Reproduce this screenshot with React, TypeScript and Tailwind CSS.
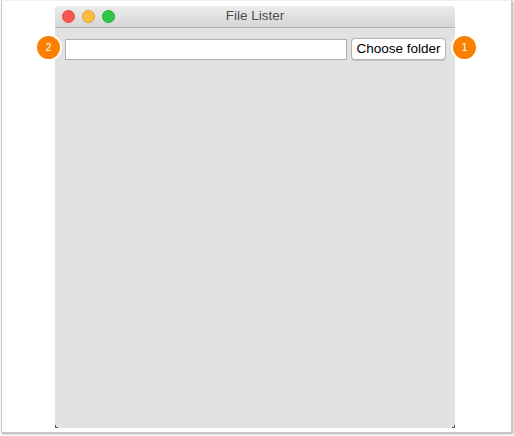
import React from "react";

export default function App() {
  return (
    <div className="w-[514px] h-[436px] bg-white relative" style={{ fontFamily: '"Helvetica Neue", "Liberation Sans", Arial, sans-serif' }}>
      <div className="absolute left-[1px] top-0 w-[511px] h-[433px] border-l border-r border-b border-t border-[#c8c8c8] border-t-[#f0f0f0] shadow-[1px_1px_2px_rgba(0,0,0,0.35)]" />
      <div className="absolute left-[55px] top-[6px] w-[400px] h-[422px] flex flex-col bg-[#e2e2e2] rounded-t-[4px] overflow-hidden">
        <div className="h-[22px] relative flex items-center bg-gradient-to-b from-[#ececec] to-[#d6d6d6] border-b border-[#b4b4b4]">
          <div className="flex gap-[7px] pl-[7px]">
            <div className="w-[13px] h-[13px] rounded-full bg-[#fc5753] border border-[#e0443e]" />
            <div className="w-[13px] h-[13px] rounded-full bg-[#fdbc40] border border-[#dea123]" />
            <div className="w-[13px] h-[13px] rounded-full bg-[#33c748] border border-[#1aab29]" />
          </div>
          <div className="absolute inset-0 flex items-center justify-center text-[13.5px] text-[#4d4d4d]">File Lister</div>
        </div>
        <div className="flex items-center gap-[4px] pl-[10px] pt-[10px]">
          <div className="w-[282px] h-[21px] bg-white border border-[#b0b0b0]" />
          <div className="w-[95px] h-[22px] flex items-center justify-center bg-white border border-[#b6b6b6] rounded-[4px] text-[13.5px] text-black shadow-[0_0.5px_1px_rgba(0,0,0,0.15)]">Choose folder</div>
        </div>
        <div className="flex-1" />
      </div>
      <div className="absolute left-[55px] top-[425px] w-[3px] h-[3px] border-l border-b border-[#555]" />
      <div className="absolute left-[452px] top-[425px] w-[3px] h-[3px] border-r border-b border-[#555]" />
      <div className="absolute left-[35px] top-[34px] w-[27px] h-[27px] rounded-full bg-[#fb7f00] border-2 border-white flex items-center justify-center text-white text-[10px]">2</div>
      <div className="absolute left-[451px] top-[34px] w-[27px] h-[27px] rounded-full bg-[#fb7f00] border-2 border-white flex items-center justify-center text-white text-[10px]">1</div>
    </div>
  );
}
